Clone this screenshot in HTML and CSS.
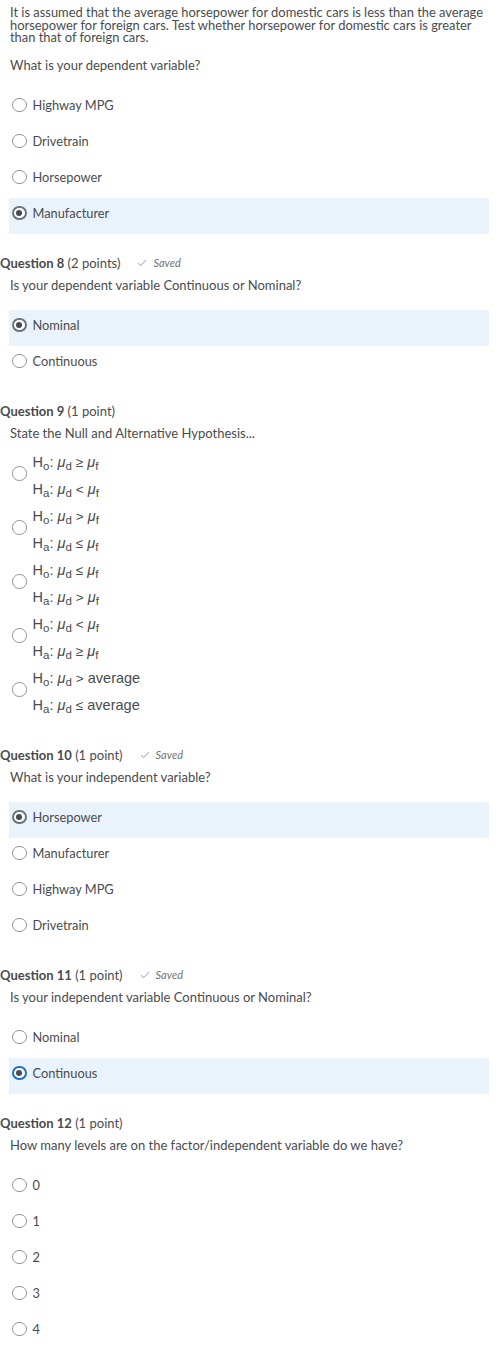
FILE: index.html
```html
<!DOCTYPE html>
<html lang="en">
<head>
<meta charset="utf-8">
<title>Quiz</title>
<link rel="stylesheet" href="styles.css">
</head>
<body>
<main class="page">
  <section class="question first">
    <p class="intro">It is assumed that the average horsepower for domestic cars is less than the average horsepower for foreign cars. Test whether horsepower for domestic cars is greater than that of foreign cars.</p>
    <p class="prompt">What is your dependent variable?</p>
    <div class="options">
      <div class="option"><span class="radio"></span><span class="label">Highway MPG</span></div>
      <div class="option"><span class="radio"></span><span class="label">Drivetrain</span></div>
      <div class="option"><span class="radio"></span><span class="label">Horsepower</span></div>
      <div class="option selected"><span class="radio checked"></span><span class="label">Manufacturer</span></div>
    </div>
  </section>

  <section class="question">
    <div class="qhead"><span class="qtitle"><b>Question 8</b> (2 points)</span><span class="saved"><svg class="check" viewBox="0 0 10 8" width="10" height="8"><path d="M1 4.2 L3.6 6.6 L9 1.2" fill="none" stroke="#b3b7b9" stroke-width="1.1"/></svg>Saved</span></div>
    <p class="prompt">Is your dependent variable Continuous or Nominal?</p>
    <div class="options">
      <div class="option selected"><span class="radio checked"></span><span class="label">Nominal</span></div>
      <div class="option"><span class="radio"></span><span class="label">Continuous</span></div>
    </div>
  </section>

  <section class="question">
    <div class="qhead"><span class="qtitle"><b>Question 9</b> (1 point)</span></div>
    <p class="prompt">State the Null and Alternative Hypothesis...</p>
    <div class="hyps">
      <div class="hyp"><span class="radio"></span><div class="math"><div class="mline">H<sub>o</sub>: <i>μ</i><sub>d</sub> <span class="op">≥</span> <i>μ</i><sub>f</sub></div><div class="mline">H<sub>a</sub>: <i>μ</i><sub>d</sub> <span class="op">&lt;</span> <i>μ</i><sub>f</sub></div></div></div>
      <div class="hyp"><span class="radio"></span><div class="math"><div class="mline">H<sub>o</sub>: <i>μ</i><sub>d</sub> <span class="op">&gt;</span> <i>μ</i><sub>f</sub></div><div class="mline">H<sub>a</sub>: <i>μ</i><sub>d</sub> <span class="op">≤</span> <i>μ</i><sub>f</sub></div></div></div>
      <div class="hyp"><span class="radio"></span><div class="math"><div class="mline">H<sub>o</sub>: <i>μ</i><sub>d</sub> <span class="op">≤</span> <i>μ</i><sub>f</sub></div><div class="mline">H<sub>a</sub>: <i>μ</i><sub>d</sub> <span class="op">&gt;</span> <i>μ</i><sub>f</sub></div></div></div>
      <div class="hyp"><span class="radio"></span><div class="math"><div class="mline">H<sub>o</sub>: <i>μ</i><sub>d</sub> <span class="op">&lt;</span> <i>μ</i><sub>f</sub></div><div class="mline">H<sub>a</sub>: <i>μ</i><sub>d</sub> <span class="op">≥</span> <i>μ</i><sub>f</sub></div></div></div>
      <div class="hyp"><span class="radio"></span><div class="math"><div class="mline">H<sub>o</sub>: <i>μ</i><sub>d</sub> <span class="op">&gt;</span> average</div><div class="mline">H<sub>a</sub>: <i>μ</i><sub>d</sub> <span class="op">≤</span> average</div></div></div>
    </div>
  </section>

  <section class="question after-math">
    <div class="qhead"><span class="qtitle"><b>Question 10</b> (1 point)</span><span class="saved"><svg class="check" viewBox="0 0 10 8" width="10" height="8"><path d="M1 4.2 L3.6 6.6 L9 1.2" fill="none" stroke="#b3b7b9" stroke-width="1.1"/></svg>Saved</span></div>
    <p class="prompt">What is your independent variable?</p>
    <div class="options">
      <div class="option selected"><span class="radio checked"></span><span class="label">Horsepower</span></div>
      <div class="option"><span class="radio"></span><span class="label">Manufacturer</span></div>
      <div class="option"><span class="radio"></span><span class="label">Highway MPG</span></div>
      <div class="option"><span class="radio"></span><span class="label">Drivetrain</span></div>
    </div>
  </section>

  <section class="question">
    <div class="qhead"><span class="qtitle"><b>Question 11</b> (1 point)</span><span class="saved"><svg class="check" viewBox="0 0 10 8" width="10" height="8"><path d="M1 4.2 L3.6 6.6 L9 1.2" fill="none" stroke="#b3b7b9" stroke-width="1.1"/></svg>Saved</span></div>
    <p class="prompt">Is your independent variable Continuous or Nominal?</p>
    <div class="options">
      <div class="option"><span class="radio"></span><span class="label">Nominal</span></div>
      <div class="option selected"><span class="radio checked focus"></span><span class="label">Continuous</span></div>
    </div>
  </section>

  <section class="question">
    <div class="qhead"><span class="qtitle"><b>Question 12</b> (1 point)</span></div>
    <p class="prompt">How many levels are on the factor/independent variable do we have?</p>
    <div class="options">
      <div class="option"><span class="radio"></span><span class="label">0</span></div>
      <div class="option"><span class="radio"></span><span class="label">1</span></div>
      <div class="option"><span class="radio"></span><span class="label">2</span></div>
      <div class="option"><span class="radio"></span><span class="label">3</span></div>
      <div class="option"><span class="radio"></span><span class="label">4</span></div>
    </div>
  </section>
</main>
</body>
</html>
```

FILE: styles.css
```css
* { box-sizing: border-box; }
html, body { margin: 0; padding: 0; background: #ffffff; }
body {
  font-family: Lato, "Noto Sans", sans-serif;
  color: #494c4e;
  font-size: 13px;
}
.page {
  width: 501px;
  padding-top: 3px;
}
p { margin: 0; }

.question { margin-top: 19px; }
.question.first { margin-top: 0; }
.question.after-math { margin-top: 26px; }

.intro {
  margin: 0 0 13px 10px;
  padding-top: 3px;
  width: 482px;
  font-size: 12.9px;
  line-height: 12.5px;
}

.qhead {
  display: flex;
  align-items: center;
  height: 20px;
  font-size: 13px;
  margin-bottom: 4px;
}
.qtitle b { font-weight: 700; }
.saved {
  display: flex;
  align-items: center;
  margin-left: 17px;
  font-style: italic;
  font-size: 11px;
  color: #6e7376;
}
.saved .check { margin-right: 6px; }

.prompt {
  margin-left: 10px;
  line-height: 16px;
  height: 16px;
  margin-bottom: 17px;
  font-size: 13px;
}

.options { margin-left: 9px; width: 480px; }
.option {
  display: flex;
  align-items: center;
  height: 36px;
  padding-left: 3px;
  padding-bottom: 5px;
  font-size: 12.8px;
}
.option.selected { background: #eaf2fc; }

.radio {
  flex: none;
  width: 14.5px;
  height: 14.5px;
  border-radius: 50%;
  border: 1.3px solid #8f9496;
  background: #fff;
  margin-right: 6px;
  display: flex;
  align-items: center;
  justify-content: center;
}
.radio.checked { border: 2px solid #6e7376; background: #f9fbff; }
.radio.checked::after {
  content: "";
  width: 6px;
  height: 6px;
  border-radius: 50%;
  background: #494c4e;
}
.radio.focus { border-color: #1f6fcb; }

.hyps { margin-top: -9px; margin-left: 9px; }
.hyp {
  display: flex;
  align-items: flex-start;
  padding-left: 3px;
}
.hyp .radio { margin-top: 17.5px; }
.math {
  font-family: "Liberation Sans", Arial, sans-serif;
  font-size: 14.5px;
  color: #494c4e;
}
.mline { height: 27px; line-height: 27px; white-space: nowrap; }
.mline i { font-style: italic; }
.mline sub { font-size: 11.5px; vertical-align: -3px; line-height: 0; }
.op { font-size: 13.5px; }
```
